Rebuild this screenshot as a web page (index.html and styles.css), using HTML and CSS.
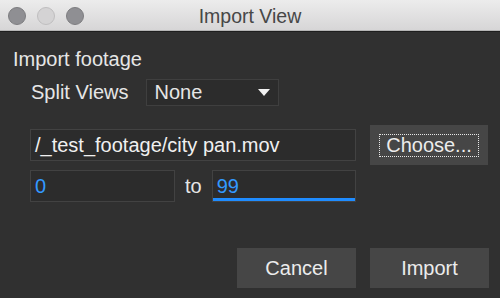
FILE: index.html
```html
<!DOCTYPE html>
<html>
<head>
<meta charset="utf-8">
<link rel="stylesheet" href="styles.css">
</head>
<body>
<div class="window">
  <div class="titlebar">
    <div class="lights">
      <span class="light dark"></span>
      <span class="light pale"></span>
      <span class="light dark"></span>
    </div>
    <div class="title">Import View</div>
    <div></div>
  </div>
  <div class="content">
    <div class="heading">Import footage</div>
    <div class="split-row">
      <span class="label">Split Views</span>
      <div class="select">
        <span>None</span>
        <svg class="arrow" width="12" height="7" viewBox="0 0 12 7"><polygon points="0,0 12,0 6,7" fill="#f2f2f2"/></svg>
      </div>
    </div>
    <div class="path-row">
      <div class="field path">/_test_footage/city pan.mov</div>
      <button class="btn choose"><span class="focus">Choose...</span></button>
    </div>
    <div class="range-row">
      <div class="field num">0</div>
      <span class="to">to</span>
      <div class="field num active">99</div>
    </div>
    <div class="actions">
      <button class="btn">Cancel</button>
      <button class="btn">Import</button>
    </div>
  </div>
</div>
</body>
</html>
```
FILE: styles.css
```css
html, body {
  margin: 0;
  padding: 0;
  background: #303030;
}
body {
  width: 500px;
  height: 298px;
  overflow: hidden;
  font-family: "Liberation Sans", Arial, sans-serif;
  color: #e6e6e6;
}
.window {
  display: flex;
  flex-direction: column;
  height: 298px;
}
.titlebar {
  height: 31px;
  display: grid;
  grid-template-columns: 1fr auto 1fr;
  align-items: center;
  background: linear-gradient(#ececec, #d6d5d6);
  border-bottom: 1px solid #1e1e1e;
  box-shadow: inset 0 -1px 0 #b5b5b5;
}
.lights {
  display: flex;
  gap: 11px;
  padding-left: 8px;
  padding-top: 1px;
}
.light {
  width: 18px;
  height: 18px;
  border-radius: 50%;
  box-sizing: border-box;
}
.light.dark {
  background: #8f8f93;
  border: 1px solid #7d7d80;
}
.light.pale {
  background: #d4d3d4;
  border: 1px solid #bfbebf;
}
.title {
  font-size: 19.5px;
  color: #474747;
  padding-top: 1px;
}
.content {
  display: flex;
  flex-direction: column;
}
.heading {
  font-size: 20px;
  line-height: 24px;
  margin-top: 15px;
  padding-left: 13px;
}
.split-row {
  display: flex;
  align-items: center;
  gap: 18px;
  margin-top: 8px;
  padding-left: 31px;
  height: 27px;
}
.label {
  font-size: 20px;
}
.select {
  width: 133px;
  height: 27px;
  box-sizing: border-box;
  border: 1px solid #3f3f3f;
  background: #2c2c2c;
  display: flex;
  align-items: center;
  justify-content: space-between;
  padding: 0 8px 0 7px;
  font-size: 20px;
}
.path-row {
  display: flex;
  align-items: center;
  gap: 14px;
  margin-top: 19px;
  padding-left: 30px;
  height: 40px;
}
.field {
  height: 32px;
  box-sizing: border-box;
  border: 1px solid #424242;
  background: #2c2c2c;
  font-size: 20px;
  line-height: 30px;
  padding-left: 4px;
  color: #f0f0f0;
}
.path {
  width: 326px;
}
.btn {
  width: 119px;
  height: 40px;
  border: none;
  background: #464646;
  color: #ececec;
  font-family: "Liberation Sans", Arial, sans-serif;
  font-size: 20px;
  padding: 0;
  display: flex;
  align-items: center;
  justify-content: center;
}
.btn.choose {
  width: 118px;
}
.focus {
  border: 1px dotted #e8e8e8;
  width: 98px;
  height: 21px;
  line-height: 21px;
  display: block;
}
.range-row {
  display: flex;
  align-items: center;
  margin-top: 5px;
  padding-left: 30px;
  height: 32px;
}
.num {
  width: 145px;
  color: #3399ff;
}
.num.active {
  width: 144px;
  box-shadow: inset 0 -3px 0 #1f8cff;
}
.to {
  font-size: 20px;
  padding: 0 10px;
}
.actions {
  display: flex;
  justify-content: flex-end;
  gap: 14px;
  margin-top: 46px;
  padding-right: 11px;
}
```
